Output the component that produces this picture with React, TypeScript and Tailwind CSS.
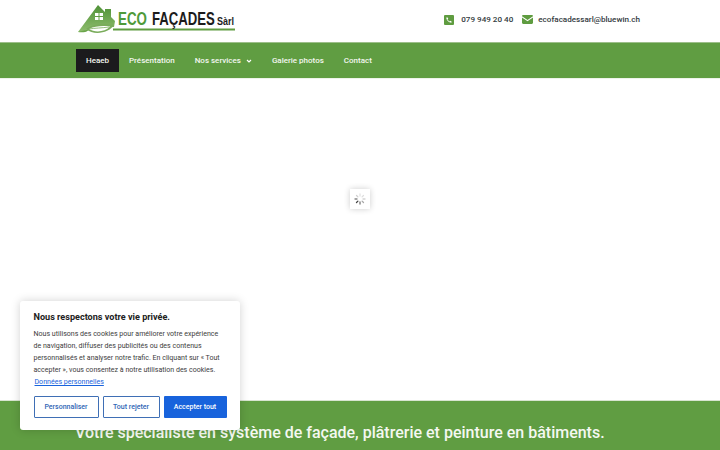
export default function App() {
  return (
    <div className="relative h-[450px] w-[720px] overflow-hidden bg-white font-['Roboto',sans-serif]">
      <header className="flex h-[42px] items-center justify-between pl-[78px] pr-[80px]">
        <div className="relative h-[36px] w-[158px]">
          <svg width="158" height="36" viewBox="0 0 158 36">
            <defs>
              <linearGradient id="roof" x1="0" y1="0" x2="0" y2="1">
                <stop offset="0" stopColor="#4e9136" />
                <stop offset="1" stopColor="#8fbd6e" />
              </linearGradient>
            </defs>
            <path d="M0 29 L20 2 L27 9 L27 6 L33 6 L33 14 L37 18 L36 24 L30 24 C22 21 12 23 6 29 Z" fill="url(#roof)" />
            <path d="M0 29 C10 31 14 24 8 27 Z" fill="#6aa54a" />
            <rect x="17" y="10" width="8" height="7" fill="#fff" />
            <path d="M21 10 v7 M17 13.5 h8" stroke="#5f9c40" strokeWidth="1" />
            <path d="M8 26 C14 21 26 20 36 22 C31 30 16 33 8 26 Z" fill="#7aac5b" />
            <path d="M11 26 C17 23 25 22.5 32 23.5 C27 29 17 30 11 26 Z" fill="#fff" />
            <path d="M11 26 C17 25 24 25 31 24" stroke="#7aac5b" strokeWidth="0.8" fill="none" />
            <rect x="35" y="25.5" width="122" height="2" fill="#5f9c40" />
          </svg>
          <div className="absolute left-[40px] top-[7px] flex items-baseline whitespace-nowrap font-['Liberation_Sans',sans-serif] font-bold leading-[18px]">
            <div className="w-[34px]">
              <span className="inline-block origin-left scale-x-[0.74] text-[18px] text-[#4f9a3a]">ECO</span>
            </div>
            <div className="w-[65px]">
              <span className="inline-block origin-left scale-x-[0.73] text-[18px] text-[#1c1c1c]">FAÇADES</span>
            </div>
            <div className="w-[19px]">
              <span className="inline-block origin-left scale-x-[0.9] text-[10px] text-[#1c1c1c]">Sàrl</span>
            </div>
          </div>
        </div>
        <div className="mb-[3px] flex items-center text-[8.1px] font-medium leading-none text-[#333a40]">
          <svg width="10" height="10" viewBox="0 0 10 10" className="mr-[7px]">
            <rect width="10" height="10" rx="1" fill="#5f9c40" />
            <path d="M7.6 6.4 L6.4 5.7 L5.7 6.5 C4.8 6.1 3.9 5.2 3.5 4.3 L4.3 3.6 L3.6 2.4 L2.3 2.6 C2.3 5.2 4.8 7.7 7.4 7.7 Z" fill="#fff" />
          </svg>
          <span>079 949 20 40</span>
          <svg width="11" height="9" viewBox="0 0 11 9" className="ml-[9px] mr-[5px]">
            <path d="M0 1.2 C0 .5 .6 0 1.2 0 H9.8 C10.4 0 11 .5 11 1.2 L5.5 5 Z" fill="#5f9c40" />
            <path d="M0 2.6 L5.5 6.3 L11 2.6 V7.8 C11 8.5 10.4 9 9.8 9 H1.2 C.6 9 0 8.5 0 7.8 Z" fill="#5f9c40" />
          </svg>
          <span>ecofacadessarl@bluewin.ch</span>
        </div>
      </header>
      <nav className="flex h-[36px] items-center border-t border-t-[#9dbf8a] bg-[#609d42] pl-[76px] text-[8px] font-medium text-[#f3f7f0]">
        <a className="flex h-[23px] w-[43px] items-center justify-center bg-[#1b1b1d]">Heaeb</a>
        <a className="ml-[10px]">Présentation</a>
        <a className="ml-[20px]">Nos services</a>
        <svg width="6" height="6" viewBox="0 0 6 6" className="ml-[5px]">
          <path d="M1 2 L3 4 L5 2" stroke="#fff" strokeWidth="1.2" fill="none" />
        </svg>
        <a className="ml-[20px]">Galerie photos</a>
        <a className="ml-[20px]">Contact</a>
      </nav>
      <main className="flex h-[322px] items-start justify-center border-t border-t-[#eef3ea] pt-[110px]">
        <div className="flex h-[20px] w-[20px] items-center justify-center bg-white shadow-[0_0_6px_rgba(0,0,0,0.2)]">
          <svg width="12" height="12" viewBox="0 0 12 12">
            <g strokeWidth="1.3" strokeLinecap="round">
              <path d="M6 1 V3" stroke="#e4e4e4" />
              <path d="M9.5 2.5 L8.1 3.9" stroke="#dedede" />
              <path d="M11 6 H9" stroke="#d4d4d4" />
              <path d="M9.5 9.5 L8.1 8.1" stroke="#a8a8a8" />
              <path d="M6 11 V9" stroke="#777" />
              <path d="M2.5 9.5 L3.9 8.1" stroke="#444" />
              <path d="M1 6 H3" stroke="#888" />
              <path d="M2.5 2.5 L3.9 3.9" stroke="#cfcfcf" />
            </g>
          </svg>
        </div>
      </main>
      <section className="h-[50px] border-t border-t-[#d8e5d0] bg-[#609d42] pl-[75px] pt-[22px] text-[16px] font-medium leading-[20px] text-[#f4f8f1]">
        Votre spécialiste en système de façade, plâtrerie et peinture en bâtiments.
      </section>
      <aside className="absolute left-[20px] top-[301px] h-[129px] w-[220px] rounded-[3px] bg-white px-[13.5px] pt-[9px] shadow-[0_0_10px_rgba(0,0,0,0.18)]">
        <h2 className="text-[9.1px] font-bold leading-[14px] text-[#212121]">Nous respectons votre vie privée.</h2>
        <p className="mt-[4px] text-[7.05px] leading-[12px] text-[#3c3c3c]">
          Nous utilisons des cookies pour améliorer votre expérience de navigation, diffuser des publicités ou des contenus personnalisés et analyser notre trafic. En cliquant sur « Tout accepter », vous consentez à notre utilisation des cookies.{" "}
          <a className="ml-[1px] text-[#1863dc] underline">Données personnelles</a>
        </p>
        <div className="mt-[8px] flex gap-[4px] text-[7px] font-medium">
          <button className="h-[22px] w-[65px] rounded-[1px] border-[1.5px] border-[#3f6fb5] text-[#2f66b5]">Personnaliser</button>
          <button className="h-[22px] w-[57px] rounded-[1px] border-[1.5px] border-[#3f6fb5] text-[#2f66b5]">Tout rejeter</button>
          <button className="h-[22px] w-[63px] rounded-[1px] bg-[#1863dc] text-white">Accepter tout</button>
        </div>
      </aside>
    </div>
  );
}
